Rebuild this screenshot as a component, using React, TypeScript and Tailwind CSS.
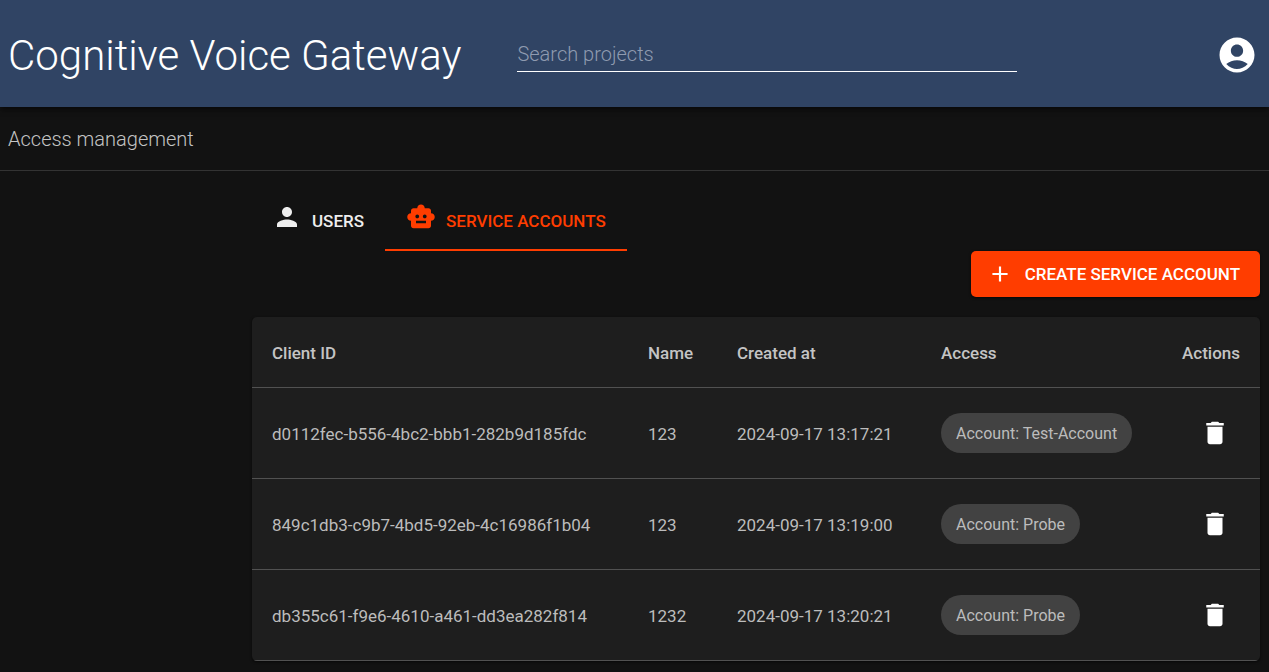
import { useState } from 'react';

const accounts = [
  { id: 'd0112fec-b556-4bc2-bbb1-282b9d185fdc', name: '123', createdAt: '2024-09-17 13:17:21', access: 'Account: Test-Account' },
  { id: '849c1db3-c9b7-4bd5-92eb-4c16986f1b04', name: '123', createdAt: '2024-09-17 13:19:00', access: 'Account: Probe' },
  { id: 'db355c61-f9e6-4610-a461-dd3ea282f814', name: '1232', createdAt: '2024-09-17 13:20:21', access: 'Account: Probe' },
];

const icons = {
  account: 'M12 2C6.48 2 2 6.48 2 12s4.48 10 10 10 10-4.48 10-10S17.52 2 12 2m0 4c1.93 0 3.5 1.57 3.5 3.5S13.93 13 12 13s-3.5-1.57-3.5-3.5S10.07 6 12 6m0 14c-2.03 0-4.43-.82-6.14-2.88C7.55 15.8 9.68 15 12 15s4.45.8 6.14 2.12C16.43 19.18 14.03 20 12 20',
  person: 'M12 12c2.21 0 4-1.79 4-4s-1.79-4-4-4-4 1.79-4 4 1.79 4 4 4m0 2c-2.67 0-8 1.34-8 4v2h16v-2c0-2.66-5.33-4-8-4',
  robot: 'M20 9V7c0-1.1-.9-2-2-2h-3c0-1.66-1.34-3-3-3S9 3.34 9 5H6c-1.1 0-2 .9-2 2v2c-1.66 0-3 1.34-3 3s1.34 3 3 3v4c0 1.1.9 2 2 2h12c1.1 0 2-.9 2-2v-4c1.66 0 3-1.34 3-3s-1.34-3-3-3M7.5 11.5c0-.83.67-1.5 1.5-1.5s1.5.67 1.5 1.5S9.83 13 9 13s-1.5-.67-1.5-1.5M16 17H8v-2h8zm-1-4c-.83 0-1.5-.67-1.5-1.5S14.17 10 15 10s1.5.67 1.5 1.5S15.83 13 15 13',
  add: 'M19 13h-6v6h-2v-6H5v-2h6V5h2v6h6z',
  trash: 'M6 19c0 1.1.9 2 2 2h8c1.1 0 2-.9 2-2V7H6zM19 4h-3.5l-1-1h-5l-1 1H5v2h14z',
};

function Icon({ name, className }: { name: keyof typeof icons; className: string }) {
  return (
    <svg className={`shrink-0 ${className}`} viewBox="0 0 24 24" fill="currentColor" aria-hidden="true">
      <path d={icons[name]} />
    </svg>
  );
}

const tabs = [
  { label: 'USERS', icon: 'person' },
  { label: 'SERVICE ACCOUNTS', icon: 'robot' },
] as const;

export default function App() {
  const [activeTab, setActiveTab] = useState('SERVICE ACCOUNTS');

  return (
    <div className="min-h-screen bg-[#121212] font-['Roboto',sans-serif] text-[#c4c4c4]">
      {/* App bar */}
      <header className="relative flex h-[107px] items-center bg-[#304464] pl-2 pr-[11px] pt-0.5 text-white shadow-md shadow-black/40">
        <h1 className="mr-14 whitespace-nowrap pt-0.5 text-[42px] leading-[50px] font-light">Cognitive Voice Gateway</h1>
        <input
          type="search"
          aria-label="Search projects"
          placeholder="Search projects"
          className="h-[34px] w-[500px] min-w-0 border-b border-white bg-transparent text-[20px] font-light outline-none placeholder:text-[#8f9bb0]"
        />
        <button aria-label="Profile" className="ml-auto">
          <Icon name="account" className="size-[42px]" />
        </button>
      </header>

      {/* Page title */}
      <div className="flex h-16 items-center border-b border-[#333] px-2">
        <h2 className="text-[20px] font-light">Access management</h2>
      </div>

      <main className="pb-3 pl-[252px] pr-[9px] pt-5">
        <div role="tablist" className="flex">
          {tabs.map((tab) => (
            <button
              key={tab.label}
              role="tab"
              aria-selected={activeTab === tab.label}
              onClick={() => setActiveTab(tab.label)}
              className={`flex h-[60px] items-center gap-[10px] border-b-2 px-[21px] pt-1 text-[17px] font-medium first:pl-5 ${
                activeTab === tab.label ? 'border-[#ff3d00] text-[#ff3d00]' : 'border-transparent text-[#eee]'
              }`}
            >
              <Icon name={tab.icon} className="mb-[10px] size-[30px]" />
              {tab.label}
            </button>
          ))}
        </div>

        <div className="flex justify-end">
          <button className="flex h-[46px] items-center gap-3 rounded-[5px] bg-[#ff3d00] pl-4 pr-5 pt-0.5 text-[17px] font-medium text-white shadow-sm shadow-black/50">
            <Icon name="add" className="mb-0.5 size-[26px]" />
            CREATE SERVICE ACCOUNT
          </button>
        </div>

        {/* Service accounts */}
        <div className="mt-5 overflow-hidden rounded-[5px] bg-[#1e1e1e] shadow-sm shadow-black/50">
          <table className="w-full table-fixed text-left">
            <colgroup>
              <col />
              <col className="w-[89px]" />
              <col className="w-[204px]" />
              <col className="w-[241px]" />
              <col className="w-[98px]" />
            </colgroup>
            <thead>
              <tr className="h-[70px] border-b border-[#515151] text-[17px]">
                <th className="px-5 pt-1 font-medium">Client ID</th>
                <th className="pl-5 pt-1 font-medium">Name</th>
                <th className="px-5 pt-1 font-medium">Created at</th>
                <th className="px-5 pt-1 font-medium">Access</th>
                <th className="pr-5 pt-1 text-right font-medium">Actions</th>
              </tr>
            </thead>
            <tbody className="text-[#bcbcbc]">
              {accounts.map((account) => (
                <tr key={account.id} className="h-[91px] border-b border-[#515151] text-[17px]">
                  <td className="px-5 pt-1">{account.id}</td>
                  <td className="pl-5 pt-1">{account.name}</td>
                  <td className="px-5 pt-1">{account.createdAt}</td>
                  <td className="px-5">
                    <span className="inline-flex h-10 items-center rounded-full bg-[#424242] px-[15px] pt-[3px] text-[16px]">
                      {account.access}
                    </span>
                  </td>
                  <td className="pr-[30px] text-right">
                    <button aria-label={`Delete ${account.id}`} className="align-middle text-white">
                      <Icon name="trash" className="size-[30px]" />
                    </button>
                  </td>
                </tr>
              ))}
            </tbody>
          </table>
        </div>
      </main>
    </div>
  );
}
